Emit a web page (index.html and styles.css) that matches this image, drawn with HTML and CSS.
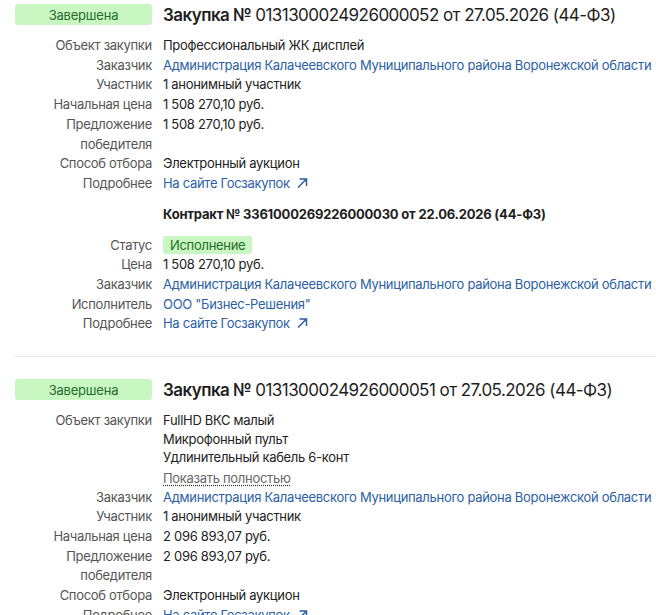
FILE: index.html
```html
<!DOCTYPE html>
<html lang="ru">
<head>
<meta charset="utf-8">
<link rel="stylesheet" href="styles.css">
</head>
<body>
<div class="list">
  <section class="card">
    <div class="head">
      <span class="badge">Завершена</span>
      <h2 class="title"><b>Закупка №</b> 0131300024926000052 от 27.05.2026 (44-ФЗ)</h2>
    </div>
    <dl class="rows">
      <dt>Объект закупки</dt><dd>Профессиональный ЖК дисплей</dd>
      <dt>Заказчик</dt><dd><a class="link" href="#">Администрация Калачеевского Муниципального района Воронежской области</a></dd>
      <dt>Участник</dt><dd>1 анонимный участник</dd>
      <dt>Начальная цена</dt><dd>1 508 270,10 руб.</dd>
      <dt>Предложение победителя</dt><dd>1 508 270,10 руб.</dd>
      <dt>Способ отбора</dt><dd>Электронный аукцион</dd>
      <dt>Подробнее</dt><dd><a class="link" href="#">На сайте Госзакупок <svg class="arrow" width="12" height="12" viewBox="0 0 12 12"><path d="M2 10.5L10 2.5M3.5 2h7v7" fill="none" stroke="currentColor" stroke-width="1.5"/></svg></a></dd>
    </dl>
    <div class="contract">
      <h3 class="ctitle">Контракт № 3361000269226000030 от 22.06.2026 (44-ФЗ)</h3>
      <dl class="rows">
        <dt>Статус</dt><dd><span class="pill">Исполнение</span></dd>
        <dt>Цена</dt><dd>1 508 270,10 руб.</dd>
        <dt>Заказчик</dt><dd><a class="link" href="#">Администрация Калачеевского Муниципального района Воронежской области</a></dd>
        <dt>Исполнитель</dt><dd><a class="link" href="#">ООО "Бизнес-Решения"</a></dd>
        <dt>Подробнее</dt><dd><a class="link" href="#">На сайте Госзакупок <svg class="arrow" width="12" height="12" viewBox="0 0 12 12"><path d="M2 10.5L10 2.5M3.5 2h7v7" fill="none" stroke="currentColor" stroke-width="1.5"/></svg></a></dd>
      </dl>
    </div>
  </section>
  <section class="card">
    <div class="head">
      <span class="badge">Завершена</span>
      <h2 class="title"><b>Закупка №</b> 0131300024926000051 от 27.05.2026 (44-ФЗ)</h2>
    </div>
    <dl class="rows">
      <dt>Объект закупки</dt><dd class="items"><span>FullHD ВКС малый</span><span>Микрофонный пульт</span><span>Удлинительный кабель 6-конт</span><a class="more" href="#">Показать полностью</a></dd>
      <dt>Заказчик</dt><dd><a class="link" href="#">Администрация Калачеевского Муниципального района Воронежской области</a></dd>
      <dt>Участник</dt><dd>1 анонимный участник</dd>
      <dt>Начальная цена</dt><dd>2 096 893,07 руб.</dd>
      <dt>Предложение победителя</dt><dd>2 096 893,07 руб.</dd>
      <dt>Способ отбора</dt><dd>Электронный аукцион</dd>
      <dt>Подробнее</dt><dd><a class="link" href="#">На сайте Госзакупок <svg class="arrow" width="12" height="12" viewBox="0 0 12 12"><path d="M2 10.5L10 2.5M3.5 2h7v7" fill="none" stroke="currentColor" stroke-width="1.5"/></svg></a></dd>
    </dl>
  </section>
</div>
</body>
</html>
```
FILE: styles.css
```css
* { box-sizing: border-box; }
body {
  margin: 0;
  background: #fff;
  font-family: Inter, "Noto Sans", sans-serif;
  font-size: 13px;
  letter-spacing: -0.3px;
  color: #222;
}
.list { padding: 4px 0 0 15px; }
.card { padding-bottom: 22px; }
.card + .card { border-top: 1px solid #e6e6e6; padding-top: 22px; }
.head {
  display: grid;
  grid-template-columns: 137px 1fr;
  column-gap: 11px;
  align-items: center;
  margin-bottom: 11px;
}
.badge {
  display: flex;
  justify-content: center;
  align-items: center;
  height: 21px;
  background: #c9f7c1;
  color: #276b2b;
  border-radius: 3px;
  font-size: 13px;
  letter-spacing: -0.2px;
}
.title {
  margin: 0;
  font-size: 17px;
  font-weight: 400;
  letter-spacing: -0.55px;
  color: #1e1e1e;
  white-space: nowrap;
}
.title b { font-weight: 600; }
.rows {
  display: grid;
  grid-template-columns: 137px 1fr;
  column-gap: 11px;
  margin: 0;
  line-height: 19.7px;
}
.rows dt { text-align: right; color: #555; }
.rows dd { margin: 0; white-space: nowrap; }
.link { color: #2b5fa6; text-decoration: none; }
.arrow { vertical-align: -1px; margin-left: 3px; }
.items { display: flex; flex-direction: column; align-items: flex-start; line-height: 18.5px; }
.items .more {
  color: #666;
  text-decoration: underline dotted #333;
  text-underline-offset: 2px;
  margin-top: 1px;
  line-height: 20px;
}
.contract { margin-top: 12px; }
.ctitle {
  margin: 0 0 14px 148px;
  font-size: 13px;
  font-weight: 700;
  letter-spacing: -0.2px;
  color: #1e1e1e;
}
.pill {
  display: inline-block;
  background: #c9f7c1;
  color: #276b2b;
  border-radius: 3px;
  padding: 0 7px;
  line-height: 18px;
}
```
